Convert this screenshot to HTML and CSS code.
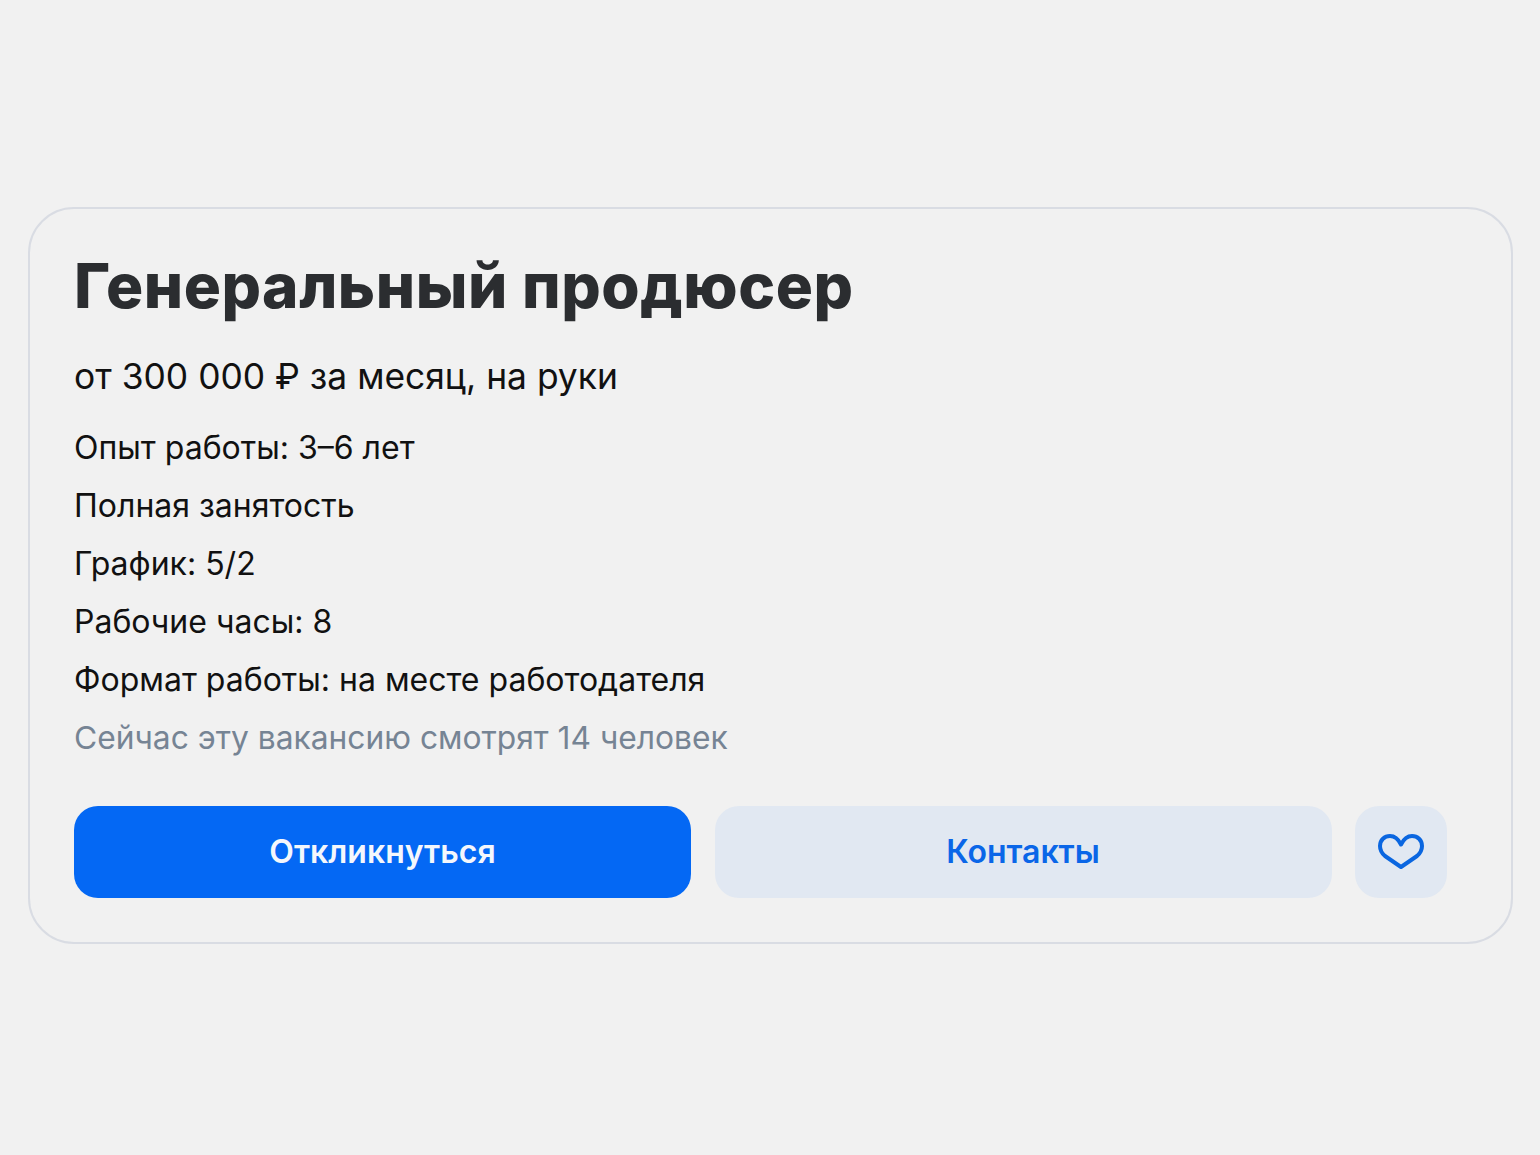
FILE: index.html
```html
<!DOCTYPE html>
<html lang="ru">
<head>
<meta charset="utf-8">
<title>Вакансия</title>
<link rel="stylesheet" href="styles.css">
</head>
<body>
<main class="card">
  <h1 class="title">Генеральный продюсер</h1>
  <p class="salary">от 300 000 ₽ за месяц, на руки</p>
  <ul class="facts">
    <li>Опыт работы: 3–6 лет</li>
    <li>Полная занятость</li>
    <li>График: 5/2</li>
    <li>Рабочие часы: 8</li>
    <li>Формат работы: на месте работодателя</li>
    <li class="muted">Сейчас эту вакансию смотрят 14 человек</li>
  </ul>
  <div class="actions">
    <button class="btn primary">Откликнуться</button>
    <button class="btn secondary">Контакты</button>
    <button class="fav" aria-label="В избранное">
      <svg class="heart" width="48" height="40" viewBox="0 0 48 40"><path d="M24 34L8 23C4.500 20 3 16.500 3 13C3 7 7.500 3 13 3C18 3 21.500 6.500 24 11.500C26.500 6.500 30 3 35 3C40.500 3 45 7 45 13C45 16.500 43.500 20 40 23Z" fill="none" stroke="#0a66e0" stroke-width="4" stroke-linejoin="round"/></svg>
    </button>
  </div>
</main>
</body>
</html>
```
FILE: styles.css
```css
* { box-sizing: border-box; }
html, body { margin: 0; height: 1155px; }
body {
  background: #f1f1f1;
  font-family: Inter, "Liberation Sans", sans-serif;
  padding: 207px 27px 0 28px;
  overflow: hidden;
}
.card {
  width: 1485px;
  height: 737px;
  border: 2px solid #d9dce3;
  border-radius: 46px;
  padding: 44px;
}
.title {
  margin: 0;
  font-size: 62px;
  line-height: 66px;
  font-weight: 800;
  color: #2b2d30;
  letter-spacing: 0.55px;
}
.salary {
  margin: 35px 0 0 0;
  font-size: 35.400px;
  line-height: 46px;
  color: #111;
}
.facts {
  list-style: none;
  margin: 19px 0 0 0;
  padding: 0;
  font-size: 32px;
  line-height: 58px;
  color: #111;
}
.muted { color: #768494; font-size: 31.750px; }
.actions {
  display: flex;
  gap: 23.500px;
  margin-top: 39px;
}
.btn, .fav {
  border: 0;
  height: 92px;
  border-radius: 24px;
  font: inherit;
  font-size: 32px;
  font-weight: 600;
  padding: 0 0 2px;
}
.btn { width: 617px; }
.primary { background: #0468f4; color: #f4f7fc; }
.secondary { background: #e1e8f2; color: #0a66e8; }
.fav {
  width: 92px;
  background: #e1e8f2;
  display: flex;
  align-items: center;
  justify-content: center;
}
.heart { margin-top: 4px; }
```
